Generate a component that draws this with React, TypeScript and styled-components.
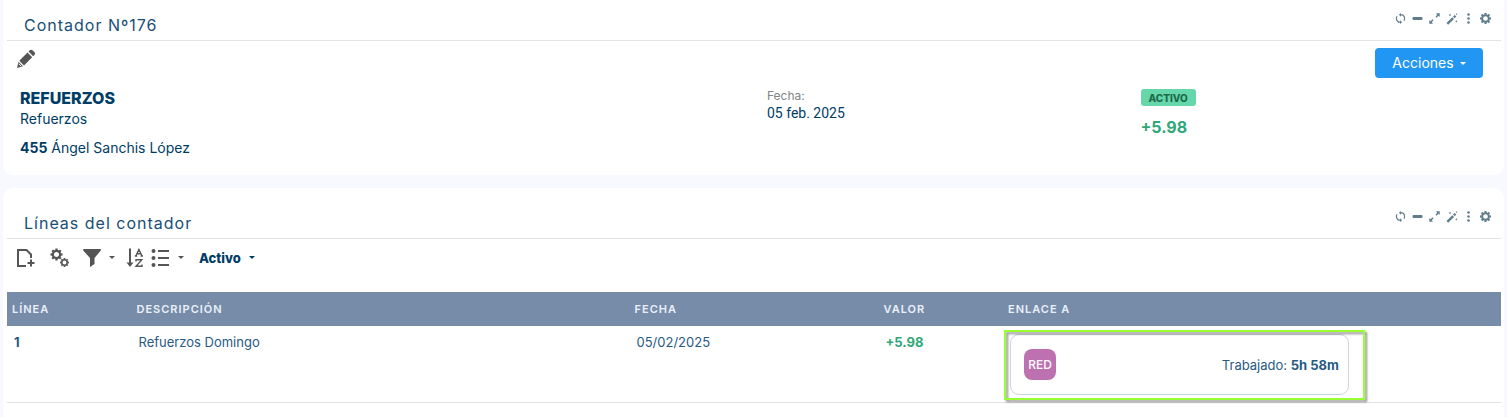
import React from "react";
import styled, { createGlobalStyle } from "styled-components";

const GlobalStyle = createGlobalStyle`
  *, *::before, *::after { box-sizing: border-box; }
  body {
    margin: 0;
    background: #f8f9ff;
    color: #003d66;
    font-family: Inter, "Liberation Sans", sans-serif;
    font-size: 14px;
    line-height: 20px;
  }
`;

const Page = styled.main`
  display: flex;
  flex-direction: column;
  gap: 13px;
  padding: 0 3px;
`;

const Panel = styled.section<{ $continued?: boolean }>`
  background: #fff;
  padding: ${(p) => (p.$continued ? "0 3px 0 4px" : "10px 3px 14px 4px")};
  border-radius: ${(p) => (p.$continued ? "0 0 10px 10px" : "10px 10px 0 0")};
`;

const PanelHeader = styled.header`
  display: flex;
  justify-content: space-between;
  height: 41px;
  padding: 10px 7px 0 17px;
  border-bottom: 1px solid #e2e2e2;
`;

const PanelTitle = styled.h2`
  margin: 0;
  padding-top: 5px;
  font-size: 16px;
  font-weight: 400;
  line-height: 20px;
  letter-spacing: 1px;
  color: #194e75;
`;

const PanelTools = styled.div`
  display: flex;
  height: 17px;
`;

const IconButton = styled.button<{ $size: number }>`
  display: flex;
  align-items: center;
  justify-content: center;
  width: ${(p) => p.$size}px;
  height: ${(p) => p.$size}px;
  padding: 0;
  border: 0;
  background: none;
  color: ${(p) => (p.$size > 17 ? "#555" : "#5f7d8c")};
  cursor: pointer;
`;

const EditRow = styled.div`
  display: flex;
  justify-content: space-between;
  align-items: flex-start;
  padding: 7px 18px 0 8px;
`;

const ActionsButton = styled.button`
  display: flex;
  align-items: center;
  justify-content: center;
  gap: 6px;
  width: 108px;
  height: 30px;
  padding: 0;
  border: 0;
  border-radius: 4px;
  background: #2196f3;
  color: #fff;
  font: inherit;
  cursor: pointer;
`;

const Caret = styled.span`
  border: 3px solid transparent;
  border-top-color: currentColor;
  border-bottom: 0;
`;

const Summary = styled.div`
  display: grid;
  grid-template-columns: 2fr 1fr 1fr;
  padding: 10px 0 17px;
`;

const SummaryCell = styled.div`
  display: flex;
  flex-direction: column;
  align-items: flex-start;
  padding-left: 13px;
`;

const CounterName = styled.strong`
  font-size: 16px;
  font-weight: 800;
  line-height: 21px;
`;

const Person = styled.span`
  padding-top: 9px;
`;

const FieldLabel = styled.span`
  font-size: 12px;
  line-height: 15px;
  color: #808488;
`;

const DateValue = styled.time`
  font-family: Roboto, "Liberation Sans", sans-serif;
`;

const StatusBadge = styled.span`
  margin: 1px 0 11px;
  padding: 1px 8px 0;
  border-radius: 3px;
  background: #66d6ab;
  color: #1c6b4a;
  font-size: 10px;
  font-weight: 800;
  line-height: 16px;
`;

const Total = styled.strong`
  font-size: 16px;
  color: #2fa878;
`;

const Toolbar = styled.div`
  display: flex;
  align-items: center;
  gap: 12px;
  height: 53px;
  padding: 0 8px 16px;
  color: #555;
`;

const MenuButton = styled.button`
  display: flex;
  align-items: center;
  gap: 8px;
  height: 22px;
  padding: 0;
  border: 0;
  background: none;
  color: #555;
  cursor: pointer;
`;

const SortButton = styled(IconButton)`
  margin: 0 -5px 0 -1px;
`;

const FilterButton = styled(MenuButton)`
  padding-left: 3px;
  color: #003d66;
  font: inherit;
  font-size: 13px;
  font-weight: 800;
`;

const Table = styled.table`
  width: 100%;
  table-layout: fixed;
  border-collapse: collapse;
  font-size: 13px;
  line-height: 16px;
  color: #285a82;
`;

const HeadCell = styled.th<{ $span: number }>`
  width: calc(100% * ${(p) => p.$span} / 12);
  height: 34px;
  padding: 0 5px;
  background: #768ca9;
  color: #eaf0fa;
  font-size: 11px;
  font-weight: 600;
  letter-spacing: 1px;
  text-align: left;
`;

const Cell = styled.td`
  padding: 8px 7px 7px;
  border-bottom: 1px solid #e2e2e2;
  vertical-align: top;
`;

const Value = styled.strong`
  color: #2fa878;
`;

const LinkCard = styled.div`
  position: relative;
  display: flex;
  align-items: center;
  justify-content: space-between;
  width: 70%;
  height: 61px;
  padding: 0 9px 0 13px;
  border: 1px solid #cbd5de;
  border-radius: 9px;

  &::after {
    content: "";
    position: absolute;
    inset: -5px -17px -6px -7px;
    border: 2px solid #99ff33;
    filter: drop-shadow(2px 2px 1px rgba(50, 40, 50, 0.55));
    pointer-events: none;
  }
`;

const ShiftTag = styled.span`
  width: 32px;
  border-radius: 8px;
  background: #be71b1;
  color: #fff;
  font-size: 12px;
  font-weight: 500;
  line-height: 31px;
  text-align: center;
`;

const RefreshIcon = () => (
  <svg width="11" height="11" viewBox="0 0 24 24" fill="none" stroke="currentColor" strokeWidth="2.6">
    <path d="M9 20.500A9 9 0 0 1 4.500 7M15 3.500A9 9 0 0 1 19.500 17M12 4h4.500M12 20H7.500" />
    <path d="M13 0v8L8.500 4zM11 24v-8l4.500 4z" fill="currentColor" stroke="none" />
  </svg>
);
const MinusIcon = () => (
  <svg width="11" height="11" viewBox="0 0 11 11">
    <rect x="0.500" y="4" width="10" height="3" rx="1" fill="currentColor" />
  </svg>
);
const ExpandIcon = () => (
  <svg width="11" height="11" viewBox="0 0 11 11" fill="currentColor">
    <path d="M7 .3h3.700V4L9.400 2.800 7.500 4.700l-1-1L8.200 1.800zM4 10.700H.300V7l1.300 1.200L3.500 6.300l1 1L2.800 9.200z" />
  </svg>
);
const WandIcon = () => (
  <svg width="12" height="12" viewBox="0 0 12 12" fill="currentColor">
    <path d="M.5 10 6.300 4.200l1.700 1.700L2.200 11.700zM7 3.500l1.600-1.600 1.700 1.700-1.600 1.600z" />
    <path d="M4 .6l.4 1 .9.400-.9.400-.4 1-.4-1-.9-.4.900-.4zM10.500 0l.3.800.8.300-.8.300-.3.800-.3-.8-.8-.3.800-.3zM10.300 7l.4 1 .9.400-.9.400-.4 1-.4-1-.9-.4.900-.4z" />
  </svg>
);
const DotsIcon = () => (
  <svg width="11" height="11" viewBox="0 0 11 11" fill="currentColor">
    <circle cx="5.500" cy="1.500" r="1.300" />
    <circle cx="5.500" cy="5.500" r="1.300" />
    <circle cx="5.500" cy="9.500" r="1.300" />
  </svg>
);

/* Toothed ring shared by the settings icons, drawn around a given centre. */
const Gear = ({ cx, cy, r }: { cx: number; cy: number; r: number }) => (
  <g transform={`translate(${cx} ${cy})`} fill="currentColor">
    <circle r={r * 0.61} fill="none" stroke="currentColor" strokeWidth={r * 0.36} />
    {[0, 45, 90, 135, 180, 225, 270, 315].map((a) => (
      <rect key={a} x={-r * 0.19} y={-r} width={r * 0.38} height={r * 0.34} transform={`rotate(${a})`} />
    ))}
  </g>
);
const GearIcon = () => (
  <svg width="11" height="11" viewBox="0 0 11 11">
    <Gear cx={5.5} cy={5.5} r={5.5} />
  </svg>
);
const PencilIcon = () => (
  <svg width="20" height="20" viewBox="0 0 20 20" fill="currentColor">
    <path d="M3.300 11.800 11.500 3.600l4.700 4.700L8 16.500zM12.500 2.600l1.300-1.300c.8-.8 2-.7 2.900.2l1.600 1.600c.9.900 1 2.100.2 2.900l-1.300 1.300zM2.500 12.800l4.500 4.500L1 19z" />
    <path d="M2.700 14.700 5.200 17.200" stroke="#fff" strokeWidth="1" />
  </svg>
);
const FileAddIcon = () => (
  <svg width="20" height="20" viewBox="0 0 20 20" fill="none" stroke="currentColor" strokeWidth="2">
    <path d="M10 18H2V2h8.500L15 6.500V10" />
    <path d="M15 11.500v7M11.500 15h7" strokeWidth="2" />
  </svg>
);
const GearsIcon = () => (
  <svg width="20" height="20" viewBox="0 0 20 20">
    <Gear cx={6.5} cy={6.5} r={6} />
    <Gear cx={14.500} cy={14.500} r={4.500} />
  </svg>
);
const FunnelIcon = () => (
  <svg width="18" height="20" viewBox="0 0 18 20" fill="currentColor">
    <path d="M.2 1h17.600v1.500L11.500 10v6L7 19v-9L.2 2.500z" />
  </svg>
);
const SortIcon = () => (
  <svg width="18" height="20" viewBox="0 0 18 20" fill="none" stroke="currentColor">
    <path d="M4 .5V17" strokeWidth="2" />
    <path d="M.5 14.500h7L4 19z" fill="currentColor" stroke="none" />
    <path d="M9.800 8 12.900 1.500 16 8M10.900 5.700h4M8.800 8h2.400M14.600 8h2.400" strokeWidth="1.400" />
    <path d="M10 13.500V11.700h5.800L10 18.300h6v-1.800" strokeWidth="1.400" />
  </svg>
);
const ListIcon = () => (
  <svg width="19" height="20" viewBox="0 0 19 20" fill="currentColor">
    {[3, 10, 17].map((y) => (
      <g key={y}>
        <circle cx="2.500" cy={y} r="2" />
        <rect x="7" y={y - 1} width="11" height="2" />
      </g>
    ))}
  </svg>
);

const tools: [string, React.FC][] = [
  ["Actualizar", RefreshIcon],
  ["Minimizar", MinusIcon],
  ["Expandir", ExpandIcon],
  ["Asistente", WandIcon],
  ["Más opciones", DotsIcon],
  ["Configuración", GearIcon],
];

const Header = ({ title }: { title: string }) => (
  <PanelHeader>
    <PanelTitle>{title}</PanelTitle>
    <PanelTools>
      {tools.map(([label, Icon]) => (
        <IconButton key={label} $size={17} aria-label={label}>
          <Icon />
        </IconButton>
      ))}
    </PanelTools>
  </PanelHeader>
);

const columns: [string, number][] = [
  ["LÍNEA", 1],
  ["DESCRIPCIÓN", 4],
  ["FECHA", 2],
  ["VALOR", 1],
  ["ENLACE A", 4],
];

export default function App() {
  return (
    <>
      <GlobalStyle />
      <Page>
        <Panel $continued>
          <Header title="Contador Nº176" />
          <EditRow>
            <IconButton $size={22} aria-label="Editar">
              <PencilIcon />
            </IconButton>
            <ActionsButton>
              Acciones <Caret />
            </ActionsButton>
          </EditRow>
          <Summary>
            <SummaryCell>
              <CounterName>REFUERZOS</CounterName>
              <span>Refuerzos</span>
              <Person>
                <strong>455</strong> Ángel Sanchis López
              </Person>
            </SummaryCell>
            <SummaryCell>
              <FieldLabel>Fecha:</FieldLabel>
              <DateValue dateTime="2025-02-05">05 feb. 2025</DateValue>
            </SummaryCell>
            <SummaryCell>
              <StatusBadge>ACTIVO</StatusBadge>
              <Total>+5.98</Total>
            </SummaryCell>
          </Summary>
        </Panel>
        <Panel>
          <Header title="Líneas del contador" />
          <Toolbar>
            <IconButton $size={22} aria-label="Nueva línea">
              <FileAddIcon />
            </IconButton>
            <IconButton $size={22} aria-label="Procesos">
              <GearsIcon />
            </IconButton>
            <MenuButton aria-label="Filtrar">
              <FunnelIcon />
              <Caret />
            </MenuButton>
            <SortButton $size={18} aria-label="Ordenar">
              <SortIcon />
            </SortButton>
            <MenuButton aria-label="Vista">
              <ListIcon />
              <Caret />
            </MenuButton>
            <FilterButton>
              Activo <Caret />
            </FilterButton>
          </Toolbar>
          <Table>
            <thead>
              <tr>
                {columns.map(([name, span]) => (
                  <HeadCell key={name} $span={span} scope="col">
                    {name}
                  </HeadCell>
                ))}
              </tr>
            </thead>
            <tbody>
              <tr>
                <Cell>
                  <strong>1</strong>
                </Cell>
                <Cell>Refuerzos Domingo</Cell>
                <Cell>05/02/2025</Cell>
                <Cell>
                  <Value>+5.98</Value>
                </Cell>
                <Cell>
                  <LinkCard>
                    <ShiftTag>RED</ShiftTag>
                    <span>
                      Trabajado: <strong>5h 58m</strong>
                    </span>
                  </LinkCard>
                </Cell>
              </tr>
            </tbody>
          </Table>
        </Panel>
      </Page>
    </>
  );
}
